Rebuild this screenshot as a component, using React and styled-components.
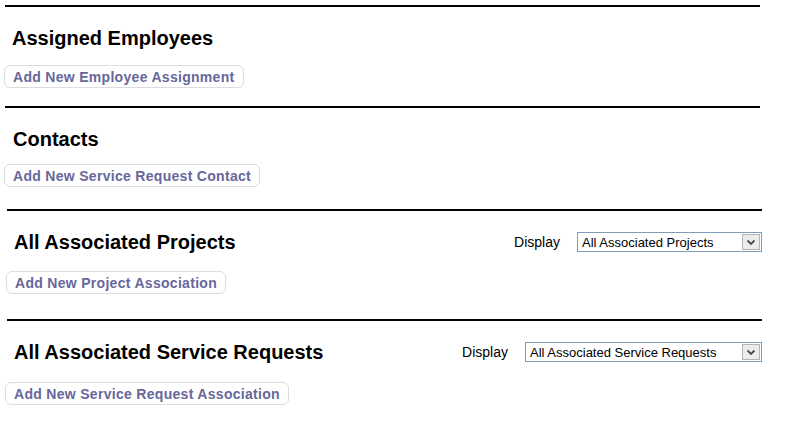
import React from 'react';
import styled, {createGlobalStyle} from 'styled-components';

const GlobalStyle = createGlobalStyle`
  body {
    margin: 0;
    background: #ffffff;
    font-family: "Liberation Sans", Arial, sans-serif;
  }
`;

const Page = styled.div`
  width: 797px;
  height: 434px;
  padding-top: 5px;
  box-sizing: border-box;
  overflow: hidden;
`;

const Section = styled.section`
  width: 755px;
  margin-left: ${props => props.$left}px;
  margin-bottom: ${props => props.$bottom}px;
  border-top: 2px solid #000;
  padding-top: 19px;
`;

const Header = styled.div`
  display: flex;
  align-items: center;
  justify-content: space-between;
  height: 24px;
  padding-left: ${props => props.$indent}px;
`;

const Title = styled.h2`
  margin: 0;
  font-size: 20px;
  line-height: 24px;
  font-weight: bold;
  color: #000;
`;

const DisplayBox = styled.div`
  display: flex;
  align-items: center;
  gap: 17px;
`;

const Label = styled.span`
  font-size: 14px;
  color: #000;
`;

const Select = styled.div`
  display: flex;
  align-items: center;
  justify-content: space-between;
  width: ${props => props.$width}px;
  height: 20px;
  box-sizing: border-box;
  border: 1px solid #7f9db9;
  background: #fff;
  padding-left: 4px;
  font-size: 13px;
  color: #000;
`;

const Arrow = styled.span`
  display: flex;
  align-items: center;
  justify-content: center;
  width: 18px;
  height: 16px;
  margin-right: 1px;
  box-sizing: border-box;
  border: 1px solid #b4b4b4;
  background: #ececec;
`;

const Button = styled.button`
  display: block;
  margin-top: ${props => props.$gap}px;
  margin-left: ${props => props.$shift}px;
  height: 23px;
  padding: 0 8px;
  border: 1px solid #dcdcdc;
  border-radius: 6px;
  background: #fff;
  font-family: "Liberation Sans", Arial, sans-serif;
  font-size: 14px;
  font-weight: bold;
  letter-spacing: 0.3px;
  color: #67679b;
  cursor: pointer;
`;

function Chevron() {
  return (
    <svg width="10" height="7" viewBox="0 0 10 7">
      <path d="M1.5 1.5 L5 5 L8.5 1.5" fill="none" stroke="#4d4d4d" strokeWidth="1.8" />
    </svg>
  );
}

const sections = [
  {title: 'Assigned Employees', button: 'Add New Employee Assignment', left: 5, bottom: 18, indent: 7, shift: -1, gap: 15},
  {title: 'Contacts', button: 'Add New Service Request Contact', left: 5, bottom: 22, indent: 8, shift: -1, gap: 13},
  {
    title: 'All Associated Projects',
    button: 'Add New Project Association',
    left: 7,
    bottom: 25,
    indent: 7,
    shift: -1,
    gap: 17,
    select: {value: 'All Associated Projects', width: 185},
  },
  {
    title: 'All Associated Service Requests',
    button: 'Add New Service Request Association',
    left: 7,
    bottom: 0,
    indent: 7,
    shift: -2,
    gap: 18,
    select: {value: 'All Associated Service Requests', width: 237},
  },
];

export default function App() {
  return (
    <>
      <GlobalStyle />
      <Page>
        {sections.map(s => (
          <Section key={s.title} $left={s.left} $bottom={s.bottom}>
            <Header $indent={s.indent}>
              <Title>{s.title}</Title>
              {s.select && (
                <DisplayBox>
                  <Label>Display</Label>
                  <Select $width={s.select.width}>
                    {s.select.value}
                    <Arrow>
                      <Chevron />
                    </Arrow>
                  </Select>
                </DisplayBox>
              )}
            </Header>
            <Button $shift={s.shift} $gap={s.gap}>
              {s.button}
            </Button>
          </Section>
        ))}
      </Page>
    </>
  );
}
